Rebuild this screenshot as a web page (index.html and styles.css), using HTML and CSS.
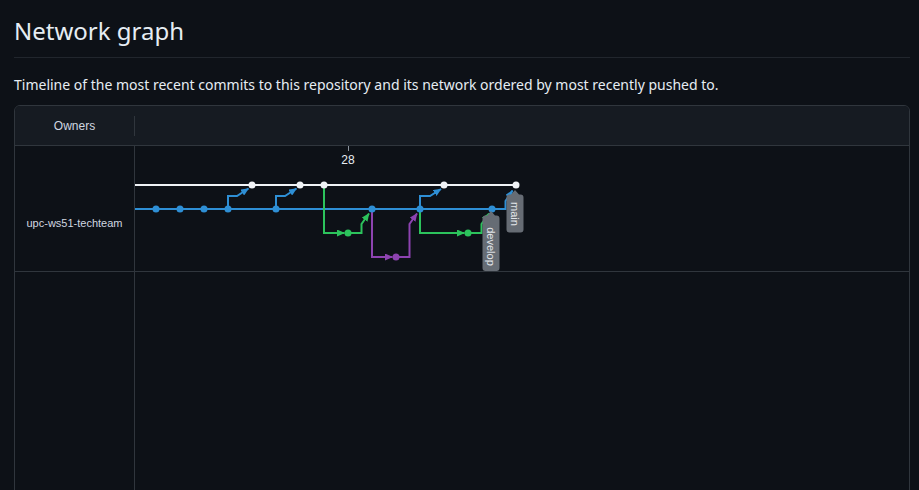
FILE: index.html
```html
<!DOCTYPE html>
<html lang="en">
<head>
<meta charset="utf-8">
<title>Network graph</title>
<link rel="stylesheet" href="styles.css">
</head>
<body>
<main class="page">
  <div class="subhead">
    <h1 class="subhead-title">Network graph</h1>
  </div>
  <p class="lead">Timeline of the most recent commits to this repository and its network ordered by most recently pushed to.</p>

  <section class="network">
    <div class="net-head">
      <div class="head-owner">Owners</div>
      <div class="head-sep"></div>
      <div class="head-graph"></div>
    </div>
    <div class="net-row">
      <div class="owner-cell owner-name">upc-ws51-techteam</div>
      <div class="graph-cell">
        <svg class="graph" width="774" height="125" viewBox="135 146 774 125">
          <defs>
            <marker id="ab" viewBox="0 0 8 7" refX="7.5" refY="3.5" markerWidth="8" markerHeight="7" markerUnits="userSpaceOnUse" orient="auto"><path class="f-blue" d="M0,0 L8,3.5 L0,7 z"/></marker>
            <marker id="ag" viewBox="0 0 8 7" refX="7.5" refY="3.5" markerWidth="8" markerHeight="7" markerUnits="userSpaceOnUse" orient="auto"><path class="f-green" d="M0,0 L8,3.5 L0,7 z"/></marker>
            <marker id="ap" viewBox="0 0 8 7" refX="7.5" refY="3.5" markerWidth="8" markerHeight="7" markerUnits="userSpaceOnUse" orient="auto"><path class="f-purple" d="M0,0 L8,3.5 L0,7 z"/></marker>
          </defs>

          <line class="tick" x1="348.5" y1="146" x2="348.5" y2="151"/>
          <text class="date" x="348" y="164">28</text>

          <path class="ln ln-white" d="M135,185 H516"/>
          <path class="ln ln-blue" d="M135,209 H492"/>

          <path class="ln ln-blue" marker-end="url(#ab)" d="M228,209 V196 H237 L248.5,188.5"/>
          <path class="ln ln-blue" marker-end="url(#ab)" d="M276,209 V196 H285 L296.5,188.5"/>
          <path class="ln ln-green" marker-end="url(#ag)" d="M324,185 V233 H344.5"/>
          <path class="ln ln-green" marker-end="url(#ag)" d="M348,233 H361.5 V224 L369,213.5"/>
          <path class="ln ln-purple" marker-end="url(#ap)" d="M372,209 V257 H392.5"/>
          <path class="ln ln-purple" marker-end="url(#ap)" d="M396,257 H409.5 V224 L417,213.5"/>
          <path class="ln ln-blue" marker-end="url(#ab)" d="M420,209 V196 H430 L441,189"/>
          <path class="ln ln-green" marker-end="url(#ag)" d="M420,209 V233 H464.5"/>
          <path class="ln ln-green" marker-end="url(#ag)" d="M468,233 H481.5 V224 L489,213.5"/>
          <path class="ln ln-blue" marker-end="url(#ab)" d="M492,209 H505.5 V201 L512.5,190.5"/>

          <g class="f-blue">
            <circle cx="156" cy="209" r="3.5"/>
            <circle cx="180" cy="209" r="3.5"/>
            <circle cx="204" cy="209" r="3.5"/>
            <circle cx="228" cy="209" r="3.5"/>
            <circle cx="276" cy="209" r="3.5"/>
            <circle cx="372" cy="209" r="3.5"/>
            <circle cx="420" cy="209" r="3.5"/>
            <circle cx="492" cy="209" r="3.5"/>
          </g>
          <g class="f-white">
            <circle cx="252" cy="185" r="3.5"/>
            <circle cx="300" cy="185" r="3.5"/>
            <circle cx="324" cy="185" r="3.5"/>
            <circle cx="444" cy="185" r="3.5"/>
            <circle cx="516" cy="185" r="3.5"/>
          </g>
          <g class="f-green">
            <circle cx="348" cy="233" r="3.5"/>
            <circle cx="468" cy="233" r="3.5"/>
          </g>
          <g class="f-purple">
            <circle cx="396" cy="257" r="3.5"/>
          </g>

          <path class="tag" d="M482.5,218.5 Q482.5,215.5 485.5,215.5 H487 L491,211 L495,215.5 H496.5 Q499.5,215.5 499.5,218.5 V268 Q499.5,271 496.5,271 H485.5 Q482.5,271 482.5,268 Z"/>
          <text class="tag-text" transform="translate(491,246.5) rotate(90)">develop</text>
          <path class="tag" d="M506.5,197.5 Q506.5,194.5 509.5,194.5 H511 L515,190 L519,194.5 H520.5 Q523.5,194.5 523.5,197.5 V229.5 Q523.5,232.5 520.5,232.5 H509.5 Q506.5,232.5 506.5,229.5 Z"/>
          <text class="tag-text" transform="translate(515,214) rotate(90)">main</text>
        </svg>
      </div>
    </div>
    <div class="net-row net-row-rest">
      <div class="owner-cell"></div>
      <div class="graph-cell"></div>
    </div>
  </section>
</main>
</body>
</html>
```

FILE: styles.css
```css
html, body {
  margin: 0;
  height: 100%;
  overflow: hidden;
  background: #0d1117;
}

body {
  color: #e6edf3;
  font-family: "Noto Sans", "Liberation Sans", sans-serif;
}

.page {
  padding: 13px 9px 0 14px;
}

.subhead {
  padding-bottom: 8px;
  border-bottom: 1px solid #21262d;
  margin-bottom: 16px;
}

.subhead-title {
  margin: 0;
  font-size: 24px;
  font-weight: 400;
  line-height: 36px;
}

.lead {
  margin: 0 0 10px;
  font-size: 14px;
  line-height: 21px;
}

.network {
  border: 1px solid #30363d;
  border-radius: 6px;
  height: 420px;
  display: flex;
  flex-direction: column;
  overflow: hidden;
  font-family: "Liberation Sans", Arial, sans-serif;
  font-size: 12px;
  color: #d1d7e0;
}

.net-head {
  height: 39px;
  display: flex;
  align-items: center;
  background: #161b22;
  border-bottom: 1px solid #30363d;
}

.head-owner {
  width: 119px;
  text-align: center;
  line-height: 14px;
}

.head-sep {
  width: 1px;
  height: 20px;
  background: #30363d;
}

.head-graph {
  flex: 1;
}

.net-row {
  display: flex;
  height: 125px;
  border-bottom: 1px solid #30363d;
}

.net-row-rest {
  flex: 1;
  border-bottom: 0;
}

.owner-cell {
  box-sizing: border-box;
  width: 120px;
  border-right: 1px solid #30363d;
  text-align: center;
}

.owner-name {
  padding-top: 70px;
  font-size: 11px;
  line-height: 14px;
}

.graph-cell {
  flex: 1;
}

.graph {
  display: block;
  overflow: visible;
}

.tick {
  stroke: #8b949e;
  stroke-width: 1;
}

.date {
  fill: #e6edf3;
  font-family: "Liberation Sans", Arial, sans-serif;
  font-size: 12px;
  text-anchor: middle;
}

.ln {
  fill: none;
  stroke-width: 2;
}

.ln-white { stroke: #f0f3f6; }
.ln-blue { stroke: #2e8fd5; }
.ln-green { stroke: #2cc35c; }
.ln-purple { stroke: #8d43b0; }

.f-white { fill: #f0f3f6; }
.f-blue { fill: #2e8fd5; }
.f-green { fill: #2cc35c; }
.f-purple { fill: #8d43b0; }

.tag {
  fill: #666c74;
}

.tag-text {
  fill: #e2e5e9;
  font-family: "Liberation Sans", Arial, sans-serif;
  font-size: 11px;
  text-anchor: middle;
  dominant-baseline: central;
}
```
